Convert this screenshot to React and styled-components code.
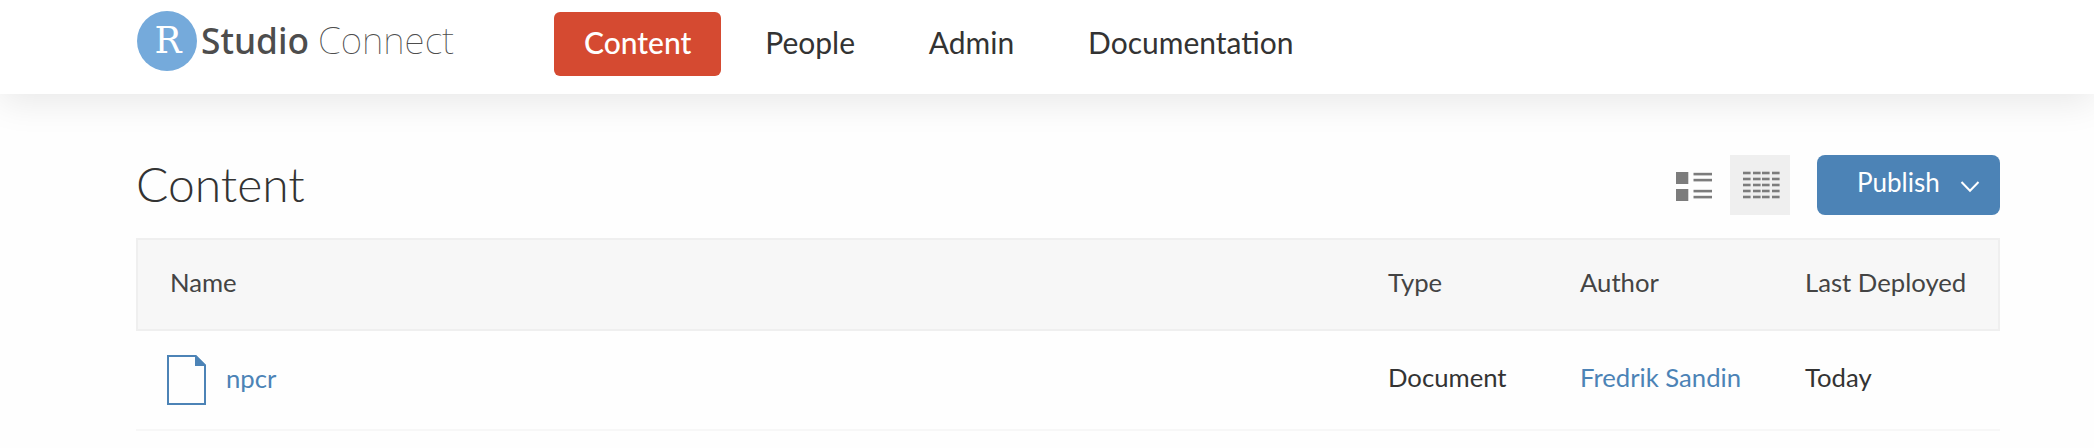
import React from "react";
import styled, { createGlobalStyle } from "styled-components";

const GlobalStyle = createGlobalStyle`
  *, *::before, *::after { box-sizing: border-box; }
  body {
    margin: 0;
    background: #fefefe;
    color: #333;
    font-family: Lato, "Liberation Sans", sans-serif;
    font-size: 26px;
    overflow: hidden;
  }
`;

const Page = styled.div`
  height: 448px;
  overflow: hidden;
`;

const TopBar = styled.header`
  display: flex;
  align-items: flex-start;
  height: 94px;
  padding-left: 136px;
  background: #fff;
  box-shadow: 0 8px 36px rgba(0, 0, 0, 0.09);
`;

const Logo = styled.svg`
  display: block;
  flex: none;
  width: 330px;
  height: 94px;
  margin-right: 88px;
`;

const Nav = styled.nav`
  display: flex;
  gap: 13.8px;
  padding-top: 12px;
`;

const NavItem = styled.a`
  height: 64px;
  padding: 0 30px;
  border-radius: 6px;
  font-size: 30px;
  line-height: 60px;
  text-decoration: none;
  color: ${(p) => (p.$active ? "#fff" : "#333")};
  font-weight: ${(p) => (p.$active ? 500 : 400)};
  background: ${(p) => (p.$active ? "#d54a31" : "transparent")};
`;

const Main = styled.main`
  width: 1864px;
  margin-left: 136px;
  padding-top: 61px;
`;

const Heading = styled.div`
  display: flex;
  height: 83px;
`;

const Title = styled.h1`
  flex: 1;
  margin: 0;
  font-size: 48px;
  font-weight: 300;
  line-height: 58px;
`;

const ViewButton = styled.button`
  display: flex;
  width: 60px;
  height: 60px;
  margin: 0 ${(p) => (p.$active ? "27px" : "6px")} 0 0;
  padding: 0;
  border: 0;
  background: ${(p) => (p.$active ? "#efefef" : "transparent")};
`;

const PublishButton = styled.button`
  display: flex;
  width: 183px;
  height: 60px;
  padding: 0 20px 0 40px;
  justify-content: space-between;
  border: 0;
  border-radius: 8px;
  background: #4c83b6;
  color: #fff;
  font: 400 26px/55px Lato, "Liberation Sans", sans-serif;
`;

const Chevron = styled.svg`
  width: 20px;
  height: 12px;
  margin-top: 26px;
`;

const Row = styled.div`
  display: grid;
  grid-template-columns: 1218px 192px 225px 1fr;
  padding-left: 34px;
  font-size: 25.7px;
`;

const HeaderRow = styled(Row)`
  height: 93px;
  padding-left: 32px;
  border: 2px solid #efefef;
  background: #f7f7f7;
  color: #444;
  line-height: 84px;
`;

const ContentRow = styled(Row)`
  height: 100px;
  border-bottom: 2px solid #f7f7f7;
  color: #333;
  line-height: 93px;
`;

const NameCell = styled.div`
  display: flex;
  gap: 20px;
`;

const ItemLink = styled.a`
  color: #4c83b6;
  text-decoration: none;
  line-height: ${(p) => (p.$low ? "95px" : "inherit")};
`;

const FileIcon = styled.svg`
  width: 39px;
  height: 50px;
  margin: 24px 0 0 -3px;
`;

const gridCols = [0, 10, 19, 29];
const gridRows = [0, 6, 12, 18, 24];

function BrandLogo() {
  return (
    <Logo viewBox="136 0 330 94" aria-label="RStudio Connect">
      <circle cx="167" cy="41" r="30" fill="#75aadb" />
      <text x="154.5" y="53" textLength="27" lengthAdjust="spacingAndGlyphs" fontFamily="'DejaVu Serif', serif" fontSize="36.5" fill="#fff">R</text>
      <text x="201" y="54" textLength="108" lengthAdjust="spacingAndGlyphs" fontFamily="'Noto Sans', sans-serif" fontWeight="500" fontSize="36.5" fill="#4d4d4d">Studio</text>
      <text x="318" y="54" textLength="136" lengthAdjust="spacingAndGlyphs" fontFamily="'Noto Sans', sans-serif" fontWeight="100" fontSize="37" fill="#4d4d4d">Connect</text>
    </Logo>
  );
}

function ListIcon() {
  return (
    <svg width="60" height="60" fill="#7c7c7c">
      {[17, 34].map((y) => (
        <g key={y}>
          <rect x="12" y={y} width="12.3" height="12" />
          <rect x="29.5" y={y + 0.8} width="18.5" height="2.6" />
          <rect x="29.5" y={y + 6.8} width="18.5" height="2.6" />
        </g>
      ))}
    </svg>
  );
}

function GridIcon() {
  return (
    <svg width="60" height="60" fill="#7c7c7c">
      {gridRows.map((y) =>
        gridCols.map((x) => (
          <rect key={`${x}-${y}`} x={13 + x} y={16.7 + y} width="7.6" height="2.6" />
        ))
      )}
    </svg>
  );
}

export default function App() {
  return (
    <Page>
      <GlobalStyle />
      <TopBar>
        <BrandLogo />
        <Nav>
          <NavItem $active>Content</NavItem>
          <NavItem>People</NavItem>
          <NavItem>Admin</NavItem>
          <NavItem>Documentation</NavItem>
        </Nav>
      </TopBar>
      <Main>
        <Heading>
          <Title>Content</Title>
          <ViewButton aria-label="Expanded view"><ListIcon /></ViewButton>
          <ViewButton $active aria-label="Compact view"><GridIcon /></ViewButton>
          <PublishButton>
            Publish
            <Chevron viewBox="0 0 20 12" fill="none" stroke="#fff" strokeWidth="2">
              <path d="M1.5 1 10 9.8 18.5 1" />
            </Chevron>
          </PublishButton>
        </Heading>
        <HeaderRow>
          <div>Name</div>
          <div>Type</div>
          <div>Author</div>
          <div>Last Deployed</div>
        </HeaderRow>
        <ContentRow>
          <NameCell>
            <FileIcon viewBox="0 0 39 50">
              <path d="M1 1H28.5L38 10.5V49H1Z" fill="none" stroke="#4c83b6" strokeWidth="2" />
              <path d="M28 0H29L39 10V11H28Z" fill="#4c83b6" />
            </FileIcon>
            <ItemLink $low>npcr</ItemLink>
          </NameCell>
          <div>Document</div>
          <ItemLink>Fredrik Sandin</ItemLink>
          <div>Today</div>
        </ContentRow>
      </Main>
    </Page>
  );
}
